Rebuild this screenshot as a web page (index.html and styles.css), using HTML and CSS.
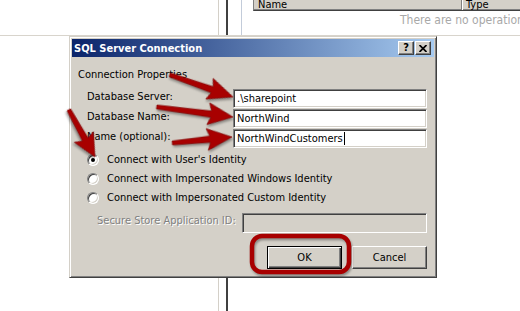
FILE: index.html
```html
<!DOCTYPE html>
<html lang="en">
  <head>
    <meta charset="UTF-8" />
    <meta name="viewport" content="width=device-width, initial-scale=1.0" />
    <title>SQL Server Connection</title>
    <link rel="stylesheet" href="styles.css">
  </head>
  <body>
    <!-- page behind the dialog -->
    <div class="desk">
      <div class="strip strip-top">
        <div class="gutter"></div>
        <div class="edge"></div>
        <div class="rail"></div>
        <div class="ops">
          <div class="cols">
            <div class="col col-name">Name</div>
            <div class="col col-type">Type</div>
          </div>
          <div class="empty">There are no operations</div>
        </div>
      </div>
      <div class="strip strip-bottom">
        <div class="gutter"></div>
        <div class="edge"></div>
        <div class="rail"></div>
      </div>
    </div>

    <!-- dialog window -->
    <div class="dialog">
      <div class="titlebar">
        <span class="title">SQL Server Connection</span>
        <div class="caption-btns">
          <span class="cap-btn cap-help">?</span>
          <span class="cap-btn">
            <svg width="8" height="7" viewBox="0 0 8 7">
              <path d="M0.5 0 L7.5 7 M7.5 0 L0.5 7" stroke="#000" stroke-width="1.7" />
            </svg>
          </span>
        </div>
      </div>

      <div class="dialog-body">
        <div class="group-label">Connection Properties</div>

        <div class="fields">
          <label>Database Server:</label>
          <div class="field">.\sharepoint</div>
          <label>Database Name:</label>
          <div class="field">NorthWind</div>
          <label>Name (optional):</label>
          <div class="field">NorthWindCustomers<span class="caret"></span></div>
        </div>

        <div class="radios">
          <div class="radio-row"><span class="radio checked"></span>Connect with User's Identity</div>
          <div class="radio-row"><span class="radio"></span>Connect with Impersonated Windows Identity</div>
          <div class="radio-row"><span class="radio"></span>Connect with Impersonated Custom Identity</div>
        </div>

        <div class="secure-row">
          <span class="disabled-label">Secure Store Application ID:</span>
          <div class="field field-disabled"></div>
        </div>

        <div class="buttons">
          <button class="btn btn-default">OK</button>
          <button class="btn">Cancel</button>
        </div>
      </div>
    </div>

    <!-- red annotations drawn over the screenshot -->
    <svg class="marks" width="520" height="311" viewBox="0 0 520 311">
      <g class="arrow" transform="translate(233 97) rotate(19.3)">
        <polygon points="-67,-2 -22,-3.2 -25,-11 0,0 -25,11 -22,3.2 -67,2" />
      </g>
      <g class="arrow" transform="translate(233 117) rotate(7.5)">
        <polygon points="-77,-2 -22,-3.2 -25,-11 0,0 -25,11 -22,3.2 -77,2" />
      </g>
      <g class="arrow" transform="translate(232 137) rotate(-5.7)">
        <polygon points="-60,-2 -22,-3.2 -25,-11 0,0 -25,11 -22,3.2 -60,2" />
      </g>
      <g class="arrow" transform="translate(95 157) rotate(61)">
        <polygon points="-54,-2 -20,-3.2 -23,-11 0,0 -23,11 -20,3.2 -54,2" />
      </g>
      <rect class="ring" x="252" y="236" width="97" height="36" rx="10" ry="10" />
    </svg>
  </body>
</html>
```

FILE: styles.css
```css
html {
  background-color: #fff;
}
body {
  margin: 0;
  width: 520px;
  height: 311px;
  position: relative;
  overflow: hidden;
  font-family: "DejaVu Sans Condensed", "DejaVu Sans", sans-serif;
  font-size: 11px;
  color: #000;
}

/* background page */
.desk {
  display: flex;
  flex-direction: column;
  height: 311px;
}
.strip {
  display: flex;
}
.strip-top {
  height: 36px;
  box-sizing: border-box;
  border-bottom: 1px solid #d8d4cc;
}
.strip-bottom {
  flex: 1;
}
.gutter {
  width: 218px;
}
.edge {
  width: 8px;
  box-sizing: border-box;
  border-left: 1px solid #d4d0c8;
}
.rail {
  width: 15px;
  box-sizing: border-box;
  border-left: 2px solid #404040;
}
.ops {
  flex: 1;
  border-left: 1px solid #c3ccda;
  padding-left: 11px;
  overflow: hidden;
}
.cols {
  display: flex;
  height: 11px;
  box-sizing: border-box;
  background-color: #d4d0c8;
  border-left: 1px solid #808080;
  border-bottom: 1px solid #404040;
  box-shadow: inset 0 -1px #808080;
  overflow: hidden;
}
.col {
  line-height: 13px;
  margin-top: -2px;
  padding-left: 4px;
}
.col-name {
  width: 203px;
}
.col-type {
  flex: 1;
  border-left: 1px solid #808080;
  box-shadow: inset 1px 0 #fff;
}
.empty {
  margin-top: 3px;
  padding-left: 147px;
  line-height: 13px;
  font-size: 12px;
  color: #a8a8a8;
  white-space: nowrap;
}

/* dialog */
.dialog {
  position: absolute;
  left: 69px;
  top: 36px;
  width: 368px;
  height: 242px;
  box-sizing: border-box;
  background-color: #d4d0c8;
  border: 1px solid;
  border-color: #d4d0c8 #404040 #404040 #d4d0c8;
  box-shadow: inset 1px 1px #fff, inset -1px -1px #808080;
  padding: 2px;
}
.titlebar {
  display: flex;
  align-items: center;
  justify-content: space-between;
  height: 18px;
  padding: 0 3px 0 2px;
  background: linear-gradient(to right, #0a246a, #a6caf0);
}
.title {
  color: #fff;
  font-weight: bold;
}
.caption-btns {
  display: flex;
  gap: 1px;
}
.cap-btn {
  display: flex;
  align-items: center;
  justify-content: center;
  width: 16px;
  height: 14px;
  box-sizing: border-box;
  background-color: #d4d0c8;
  border: 1px solid;
  border-color: #fff #404040 #404040 #fff;
  box-shadow: inset -1px -1px #808080;
  font-weight: bold;
  font-size: 11px;
  line-height: 12px;
}

.dialog-body {
  padding: 0 7px 0 6px;
}
.group-label {
  margin-top: 11px;
  line-height: 13px;
}

.fields {
  display: grid;
  grid-template-columns: 146px 194px;
  grid-auto-rows: 19px;
  row-gap: 1px;
  margin-top: 8px;
  padding-left: 9px;
}
.fields label {
  padding-top: 1px;
  line-height: 13px;
}
.field {
  display: flex;
  align-items: center;
  box-sizing: border-box;
  padding-left: 3px;
  background-color: #fff;
  border: 1px solid;
  border-color: #808080 #fff #fff #808080;
  box-shadow: inset 1px 1px #404040, inset -1px -1px #d4d0c8;
  white-space: nowrap;
}
.caret {
  width: 1px;
  height: 13px;
  margin-left: 1px;
  background-color: #000;
}

.radios {
  margin-top: 2px;
  padding-left: 9px;
}
.radio-row {
  display: flex;
  align-items: center;
  gap: 8px;
  height: 19px;
}
.radio {
  position: relative;
  width: 12px;
  height: 12px;
  box-sizing: border-box;
  border-radius: 50%;
  background-color: #fff;
  border: 1px solid;
  border-color: #808080 #fff #fff #808080;
  box-shadow: inset 1px 1px #404040, inset -1px -1px #d4d0c8;
}
.radio.checked::after {
  content: "";
  position: absolute;
  left: 3px;
  top: 3px;
  width: 4px;
  height: 4px;
  border-radius: 50%;
  background-color: #000;
}

.secure-row {
  display: flex;
  margin-top: 6px;
  padding-left: 19px;
  height: 20px;
}
.disabled-label {
  width: 145px;
  padding-top: 1px;
  line-height: 13px;
  color: #808080;
  text-shadow: 1px 1px #fff;
}
.field-disabled {
  flex: 1;
  background-color: #d4d0c8;
}

.buttons {
  display: flex;
  justify-content: flex-end;
  gap: 10px;
  margin-top: 13px;
}
.btn {
  width: 75px;
  height: 23px;
  padding: 0;
  box-sizing: border-box;
  font-family: inherit;
  font-size: 11px;
  color: #000;
  background-color: #d4d0c8;
  border: 1px solid;
  border-color: #fff #404040 #404040 #fff;
  box-shadow: inset -1px -1px #808080;
}
.btn-default {
  border-color: #000;
  box-shadow: inset 1px 1px #fff, inset -1px -1px #404040, inset -2px -2px #808080;
}

/* annotations */
.marks {
  position: absolute;
  left: 0;
  top: 0;
  pointer-events: none;
}
.arrow polygon {
  fill: #a80000;
  stroke: #780000;
  stroke-width: 0.6;
  stroke-linejoin: round;
  filter: drop-shadow(1px 2px 1px rgba(0, 0, 0, 0.35));
}
.ring {
  fill: none;
  stroke: #a80000;
  stroke-width: 4.5;
  filter: drop-shadow(1px 2px 1px rgba(0, 0, 0, 0.35));
}
```
